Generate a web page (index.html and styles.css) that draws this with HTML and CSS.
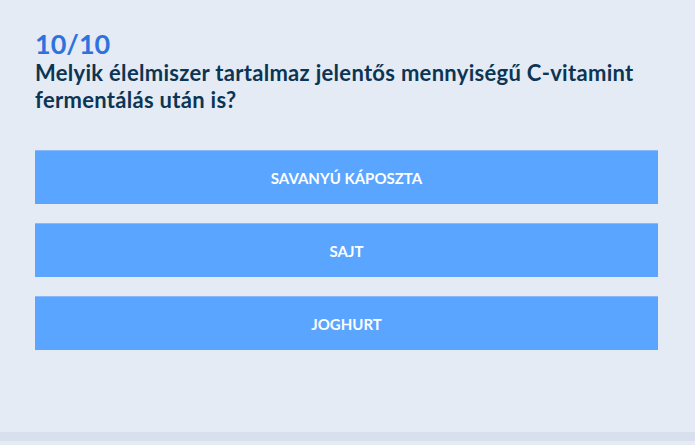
FILE: index.html
```html
<!DOCTYPE html>
<html lang="hu">
<head>
<meta charset="utf-8">
<link rel="stylesheet" href="styles.css">
</head>
<body>
<div class="page">
  <main class="quiz">
    <div class="counter">10/10</div>
    <h1 class="question">Melyik élelmiszer tartalmaz jelentős mennyiségű C-vitamint fermentálás után is?</h1>
    <div class="answers">
      <button class="answer">SAVANYÚ KÁPOSZTA</button>
      <button class="answer">SAJT</button>
      <button class="answer">JOGHURT</button>
    </div>
  </main>
  <div class="footer-strip"></div>
</div>
</body>
</html>
```
FILE: styles.css
```css
html, body {
  margin: 0;
  padding: 0;
  height: 100%;
}
body {
  background: #e4ebf5;
  font-family: Lato, "Open Sans", sans-serif;
}
.page {
  height: 445px;
  display: flex;
  flex-direction: column;
}
.quiz {
  flex: 1;
  padding: 29px 37px 0 35px;
}
.counter {
  font-size: 27px;
  font-weight: 700;
  color: #2f72dd;
  line-height: 30px;
}
.question {
  margin: 0;
  font-size: 22px;
  font-weight: 700;
  color: #0c3554;
  line-height: 27px;
  letter-spacing: 0.3px;
}
.answers {
  margin-top: 37px;
  display: flex;
  flex-direction: column;
  gap: 19px;
}
.answer {
  height: 54px;
  border: none;
  border-top: 1px solid #8ab9fb;
  background: #5aa5ff;
  color: #ffffff;
  font-family: Lato, "Open Sans", sans-serif;
  font-weight: 700;
  font-size: 15px;
  padding: 0;
  cursor: pointer;
}
.footer-strip {
  height: 9px;
  margin-bottom: 4px;
  background: #d8dfed;
}
```
